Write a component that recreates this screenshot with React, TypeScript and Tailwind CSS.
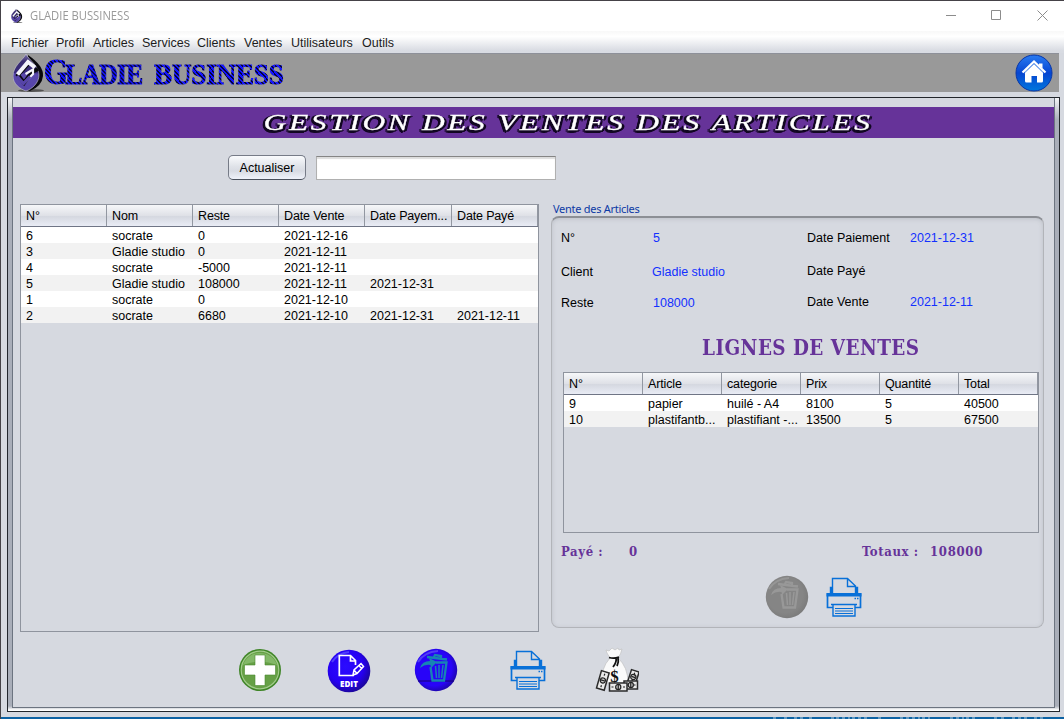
import React from "react";

const salesCols = ["N°", "Nom", "Reste", "Date Vente", "Date Payem...", "Date Payé"];
const sales = [
  ["6", "socrate", "0", "2021-12-16", "", ""],
  ["3", "Gladie studio", "0", "2021-12-11", "", ""],
  ["4", "socrate", "-5000", "2021-12-11", "", ""],
  ["5", "Gladie studio", "108000", "2021-12-11", "2021-12-31", ""],
  ["1", "socrate", "0", "2021-12-10", "", ""],
  ["2", "socrate", "6680", "2021-12-10", "2021-12-31", "2021-12-11"],
];
const lineCols = ["N°", "Article", "categorie", "Prix", "Quantité", "Total"];
const lines = [
  ["9", "papier", "huilé - A4", "8100", "5", "40500"],
  ["10", "plastifantb...", "plastifiant -...", "13500", "5", "67500"],
];

function Table({ cols, rows, grid, className }: { cols: string[]; rows: string[][]; grid: string; className: string }) {
  return (
    <div className={`border border-[#8f949e] ${className}`}>
      <div className={`grid h-[22px] border-b border-[#6f7585] bg-[linear-gradient(#f6f7f9,#dfe1e7_50%,#d5d8e0_55%,#e9ecf5)] ${grid}`}>
        {cols.map((c) => (
          <div key={c} className="overflow-hidden border-r border-[#9297a1] pl-[5px] leading-[23px] tracking-[-0.150px] whitespace-nowrap">{c}</div>
        ))}
      </div>
      {rows.map((r, i) => (
        <div key={i} className={`grid h-4 ${grid} ${i % 2 ? "bg-[#f2f2f2]" : "bg-white"}`}>
          {r.map((c, j) => (
            <div key={j} className="pl-[5px] leading-[19px] whitespace-nowrap">{c}</div>
          ))}
        </div>
      ))}
    </div>
  );
}

function Logo({ className }: { className: string }) {
  return (
    <svg viewBox="0 0 32 38" className={className}>
      <defs>
        <linearGradient id="drop" x1="0" y1="0" x2="0" y2="1">
          <stop offset="0" stopColor="#7f75ad" />
          <stop offset=".2" stopColor="#3a2d70" />
          <stop offset=".5" stopColor="#382a7b" />
          <stop offset=".54" stopColor="#5a49ac" />
          <stop offset="1" stopColor="#5644a8" />
        </linearGradient>
      </defs>
      <ellipse cx="18" cy="36.500" rx="13" ry="1.500" fill="#333" opacity=".7" />
      <path d="M15 1 Q31 12 30 22 Q29 32 17 37 L13 36 Z" fill="#08080c" />
      <path d="M13 0 C10 6 0 12 0 22 C0 30 7 35 13 37 C19 35 26 29 26 21 C26 12 16 6 13 0Z" fill="url(#drop)" stroke="#c9c9d2" strokeWidth=".6" />
      <path d="M25 15 L19 18 L11 29 L5 21 L15 10" fill="none" stroke="#08080c" strokeWidth="4" />
      <path d="M22 13.500 L15 8 L4.500 20.500" fill="none" stroke="#f4f4fa" strokeWidth="4" />
      <path d="M12.500 20 L20 15.500 V20 L12 28" fill="none" stroke="#f4f4fa" strokeWidth="2.200" />
      <path d="M4 22 L10.500 29.500 L17 22.500" fill="none" stroke="#5644a8" strokeWidth="3" />
    </svg>
  );
}

function Home() {
  return (
    <svg viewBox="0 0 38 38" className="h-[38px] w-[38px]">
      <defs>
        <linearGradient id="home" x1="0" y1="0" x2="0" y2="1">
          <stop offset="0" stopColor="#2a7cf2" />
          <stop offset=".5" stopColor="#0645d2" />
          <stop offset="1" stopColor="#0077dc" />
        </linearGradient>
      </defs>
      <circle cx="19" cy="19" r="18" fill="url(#home)" stroke="#0836a8" />
      <path d="M10 18 L19 9.500 L28 18 V27 Q28 28.500 26.500 28.500 H22 V22 H16.500 V28.500 H11.500 Q10 28.500 10 27Z" fill="#fff" />
      <path d="M24 9.500 h3.500 v5 l-3.500 -3Z" fill="#fff" />
      <path d="M7.500 18.500 L19 7.500 L30.500 18.500" fill="none" stroke="#fff" strokeWidth="2.200" />
      <path d="M9.500 19 L19 10 L28.500 19" fill="none" stroke="#7aa8ee" strokeWidth="1" />
    </svg>
  );
}

function Add() {
  return (
    <svg viewBox="0 0 44 44" className="h-11 w-11">
      <circle cx="22" cy="22" r="21" fill="#3f8527" />
      <circle cx="22" cy="22" r="18.800" fill="#66a046" stroke="#a2cb8b" strokeWidth="1.200" />
      <path d="M5 17 A18 18 0 0 1 39 17 Q22 10 5 17Z" fill="#83b868" />
      <path d="M17 7 H27 V17 H37.500 V27 H27 V37.500 H17 V27 H6.500 V17 H17Z" fill="#fff" stroke="#4b8a31" strokeWidth=".6" />
    </svg>
  );
}

function Edit() {
  return (
    <svg viewBox="0 0 44 44" className="h-11 w-11">
      <defs>
        <radialGradient id="blue" cx=".42" cy=".4" r=".62">
          <stop offset="0" stopColor="#2b0cff" />
          <stop offset=".65" stopColor="#2600f4" />
          <stop offset="1" stopColor="#1c079a" />
        </radialGradient>
      </defs>
      <circle cx="22" cy="22" r="21.300" fill="url(#blue)" />
      <path d="M5 13 Q11 4 22 3" fill="none" stroke="#7879ff" strokeWidth="2" opacity=".5" />
      <path d="M27 26.500 H12.300 V6.500 H23.500 L28.500 11.500 V16 M23.500 6.500 V12 H28.500" fill="none" stroke="#fff" strokeWidth="1.700" />
      <path d="M26 26 L27 21 L34 14.500 L36.500 17.500 L30 24.500Z M27 21 L30 24.500 M32 16.500 L34.500 19.500" fill="none" stroke="#fff" strokeWidth="1.500" />
      <text x="22" y="37.500" textAnchor="middle" fill="#fff" fontFamily="Open Sans, sans-serif" fontSize="8" fontWeight="800">EDIT</text>
    </svg>
  );
}

function Trash({ muted }: { muted?: boolean }) {
  const fg = muted ? "#989898" : "#1784b4";
  const id = muted ? "trashGrey" : "trashBlue";
  return (
    <svg viewBox="0 0 44 44" className="h-11 w-11">
      <defs>
        <radialGradient id={id} cx=".45" cy=".45" r=".6">
          <stop offset="0" stopColor={muted ? "#858585" : "#2804f8"} />
          <stop offset=".7" stopColor={muted ? "#858585" : "#2804f8"} />
          <stop offset="1" stopColor={muted ? "#797979" : "#1b079b"} />
        </radialGradient>
      </defs>
      <circle cx="22" cy="22" r="21.200" fill={`url(#${id})`} />
      <path d="M4 14 Q10 4 24 3" fill="none" stroke={muted ? "#a8a8a8" : "#7777f2"} strokeWidth="2" opacity=".5" />
      {!muted && <path d="M4 33 H40" stroke="#160072" strokeWidth="1.200" />}
      <path d="M13 9 L33 11.500 M20 9 L21 7 L27 8 L27 10" fill="none" stroke={fg} strokeWidth="2.300" />
      <path d="M6 20 Q8 13 16 13 L15 10 L23 14 L17 20 L16.500 17 Q11 16 6 20Z" fill={fg} />
      <path d="M16.500 19 L18.500 32.500 H30 L32.500 14.500 H22" fill="none" stroke={fg} strokeWidth="2.300" />
      <path d="M21.500 18 L22.500 30 M25 17 V30 M29 17 L27.500 30" stroke={fg} strokeWidth="1.500" />
    </svg>
  );
}

function Printer() {
  return (
    <svg viewBox="0 0 36 40" className="h-10 w-9" fill="none" stroke="#0870d8" strokeWidth="1.400">
      <path d="M6.500 16 V1.500 H21.500 L29.500 9 V16 M21.500 1.500 V9.500 H29.500" />
      <path d="M4.500 10.500 H6 V16 H4.500Z M30 10.500 H31.500 V16 H30Z" fill="#0870d8" />
      <path d="M0.500 16 H35.500 V19.500 H0.500Z" fill="#0870d8" stroke="none" />
      <path d="M7 30.500 H1.500 V17 H34.500 V30.500 H29 M5 27.500 H31" strokeWidth="1.700" />
      <path d="M7 27.500 V39 H29 V27.500" />
      <path d="M9 31.500 H27 M9 34 H27 M9 36.500 H27" strokeWidth="1" />
      <path d="M28.500 21.500 h1.500 M31 21.500 h1.500" />
    </svg>
  );
}

function Bill({ t, w }: { t: string; w: number }) {
  return (
    <g transform={t}>
      <rect x="0" y="0" width={w} height="8" fill="#e9e9e9" stroke="#2b2b2b" strokeWidth="1.500" />
      <circle cx={w / 2} cy="4" r="2.600" fill="#ccc" stroke="#222" strokeWidth="1.200" />
      <path d={`M${w / 2} 2 v4 M2 4 h2 M${w - 4} 4 h2`} stroke="#222" strokeWidth="1.200" />
    </g>
  );
}

function Money() {
  return (
    <svg viewBox="0 0 44 46" className="h-[46px] w-11">
      <path d="M15 11 Q11 5 11 3 L14 4 L17 1 L20 3 L23 1 L24 3 L27 2 Q26 7 23 11 Q33 20 33 36 H8 Q5 22 15 11Z" fill="#fafafa" stroke="#bbb" strokeWidth=".6" />
      <path d="M14 10.500 Q19 12 24 10 M21 11 Q22 15 18 20 M23 11 Q24 15 22 19" fill="none" stroke="#111" strokeWidth="1.800" />
      <text x="19.500" y="35" textAnchor="middle" fontFamily="Liberation Serif, serif" fontSize="17" fontWeight="700" fill="#111">$</text>
      <Bill t="translate(1.500 41) rotate(-74)" w={18} />
      <Bill t="translate(32.500 35) rotate(-72)" w={13} />
      <Bill t="translate(29 34)" w={13.5} />
      <Bill t="translate(14.500 36)" w={17.5} />
    </svg>
  );
}

function Field({ label, value, top, w }: { label: string; value: string; top: string; w: string }) {
  return (
    <div className={`flex h-4 leading-4 ${top}`}>
      <span className={w}>{label}</span>
      <span className="text-[#1230ff]">{value}</span>
    </div>
  );
}

const wordmark = "inline-block origin-left bg-[repeating-linear-gradient(45deg,#1414ff_0px,#1414ff_1.8px,#05053c_1.8px,#05053c_3.2px)] bg-clip-text text-transparent [-webkit-text-stroke:1px_transparent]";

export default function App() {
  return (
    <div className="flex h-[719px] w-[1064px] flex-col overflow-hidden border-t border-l border-[#454247] bg-[#d6d9e0] font-['Liberation_Sans',sans-serif] text-[12.5px] text-black">
      <header className="flex h-[30px] shrink-0 items-center bg-white pl-[10px]">
        <Logo className="h-[14px] w-3" />
        <span className="ml-[7px] inline-block w-[110px] origin-left scale-x-[0.935] font-['Open_Sans',sans-serif] text-[12px] whitespace-nowrap text-[#999]">GLADIE BUSSINESS</span>
        <svg viewBox="0 0 102 12" className="mr-4 mb-[2px] ml-auto h-3 w-[102px]" fill="none" stroke="#8c8c8c">
          <path d="M0 6.500 H10 M45.500 1.500 h9 v9 h-9Z M91.500 1.500 l10 10 M101.500 1.500 l-10 10" />
        </svg>
      </header>
      <nav className="flex h-[22px] shrink-0 bg-[linear-gradient(#f8f8f8,#fff_25%,#d8dbe2_90%)] pl-[10px] leading-[25px] text-[#1c1c1c]">
        <span className="w-[45px]">Fichier</span>
        <span className="w-[37px]">Profil</span>
        <span className="w-[49px]">Articles</span>
        <span className="w-[55px]">Services</span>
        <span className="w-[47px]">Clients</span>
        <span className="w-[47px]">Ventes</span>
        <span className="w-[71px]">Utilisateurs</span>
        <span>Outils</span>
      </nav>
      <div className="mr-[5px] flex h-[39px] shrink-0 items-center border-t border-[#8d9099] bg-[#999] pr-[6px] pl-3">
        <Logo className="h-[38px] w-8" />
        <div className="flex h-[38px] items-baseline font-['Liberation_Serif',serif] text-[29px] leading-[37px] font-bold whitespace-nowrap">
          <div className="-ml-px w-[110px]">
            <div className={`scale-x-[0.88] ${wordmark}`}><span className="text-[35px] tracking-[-3px]">G</span><span className="tracking-[-0.800px]">LADIE</span></div>
          </div>
          <div className={`scale-x-[0.935] tracking-[-0.200px] ${wordmark}`}>BUSINESS</div>
        </div>
        <div className="ml-auto"><Home /></div>
      </div>
      <main className="mt-[5px] ml-[6px] flex h-[615px] w-[1053px] shrink-0 border border-[#22262c] bg-[linear-gradient(#f4f5f7,#a9aeb9_22px,#a9aeb9_608px,#fff_612px)] pr-[4px] pb-[3px] pl-1">
        <div className="flex flex-1 flex-col border-x border-b border-[#6c7480] bg-[#d6d9e0] pt-[9px]">
          <div className="flex h-[31px] shrink-0 items-center justify-center bg-[#663399] pl-[70px]">
            <h1 className="scale-x-[1.312] font-['Liberation_Serif',serif] text-[24px] leading-[31px] tracking-[2px] whitespace-nowrap text-white italic [-webkit-text-stroke:0.3px_white] [text-shadow:-2px_0_0_#120722,-2px_1px_0_#120722,1px_2px_0_#120722,-2px_2px_0_#120722,2px_1px_0_#120722,-1px_3px_0_#120722]">GESTION DES VENTES DES ARTICLES</h1>
          </div>
          <div className="flex h-[66px] shrink-0 items-start gap-[10px] pt-[17px] pl-[215px]">
            <button className="h-[25px] w-[78px] rounded-[5px] border border-[#767b87] border-b-[#4a505c] bg-[linear-gradient(#fafbfd,#e0e3e9_45%,#d8dbe3_65%,#eff2fa)] pt-px">Actualiser</button>
            <input className="mt-px h-6 w-60 border border-[#b0b0b0] border-t-[#858585] bg-white shadow-[inset_0_2px_1px_#ddd] outline-none" />
          </div>
          <section className="flex h-[428px] shrink-0 pl-[7px]">
            <Table cols={salesCols} rows={sales} grid="grid-cols-[86px_86px_86px_86px_87px_86px]" className="h-[428px] w-[519px]" />
            <div className="ml-3 w-[493px]">
              <div className="-mt-[3px] h-[15px] pl-[2px] font-['Noto_Sans',sans-serif] text-[11px] leading-4 tracking-[-0.280px] text-[#0d3aa5]">Vente des Articles</div>
              <div className="h-[412px] rounded-lg border border-t-2 border-[#b2b4b9] border-t-[#8c8f95] px-[9px] pt-[12px] shadow-[inset_0_1px_4px_#999da566]">
                <div className="flex h-[102px]">
                  <div className="w-[246px]">
                    <Field label="N°" value="5" top="" w="w-[92px]" />
                    <Field label="Client" value="Gladie studio" top="mt-[18px]" w="w-[91px]" />
                    <Field label="Reste" value="108000" top="mt-[15px]" w="w-[92px]" />
                  </div>
                  <div>
                    <Field label="Date Paiement" value="2021-12-31" top="" w="w-[103px]" />
                    <Field label="Date Payé" value="" top="mt-[17px]" w="w-[103px]" />
                    <Field label="Date Vente" value="2021-12-11" top="mt-[15px]" w="w-[103px]" />
                  </div>
                </div>
                <h2 className="h-10 w-[400px] origin-[141px_50%] scale-x-[0.930] pl-[141px] font-['DejaVu_Serif_Condensed','DejaVu_Serif',serif] text-[22px] leading-[30px] font-bold tracking-[0.480px] whitespace-nowrap text-[#663399]">LIGNES DE VENTES</h2>
                <Table cols={lineCols} rows={lines} grid="grid-cols-[79px_79px_79px_79px_79px_79px]" className="ml-[2px] h-[161px] w-[476px]" />
                <div className="mt-[8px] flex h-5 font-['DejaVu_Serif_Condensed','DejaVu_Serif',serif] text-[13px] leading-[22px] font-bold whitespace-nowrap text-[#663399]">
                  <span className="w-[68px] tracking-[0.600px]">Payé :</span>
                  <span className="w-[233px]">0</span>
                  <span className="w-[68px] tracking-[0.600px]">Totaux :</span>
                  <span className="tracking-[0.700px]">108000</span>
                </div>
                <div className="mt-[14px] flex items-center gap-[17px] pl-[204px]">
                  <Trash muted />
                  <Printer />
                </div>
              </div>
            </div>
          </section>
          <div className="flex h-[76px] shrink-0 items-center pl-[225px]">
            <div className="w-[89px]"><Add /></div>
            <div className="w-[87px] pt-px"><Edit /></div>
            <div className="w-[96px]"><Trash /></div>
            <div className="w-[85px]"><Printer /></div>
            <Money />
          </div>
        </div>
      </main>
      <div className="mt-[5px] h-[2px] shrink-0 bg-[#0d62a3]">
        <svg viewBox="0 0 1063 2" className="h-[2px] w-[1063px]" stroke="#b7cfe0">
          <path d="M772 1h3m8 0h4m6 0h12m3 0h6m16 0h3m2 0h14m2 0h17m9 0h5m17 0h20m2 0h8m20 0h14m2 0h10m18 0h4m3 0h6m5 0h18m4 0h12" strokeWidth="1" strokeDasharray="3 3" fill="none" />
        </svg>
      </div>
    </div>
  );
}
